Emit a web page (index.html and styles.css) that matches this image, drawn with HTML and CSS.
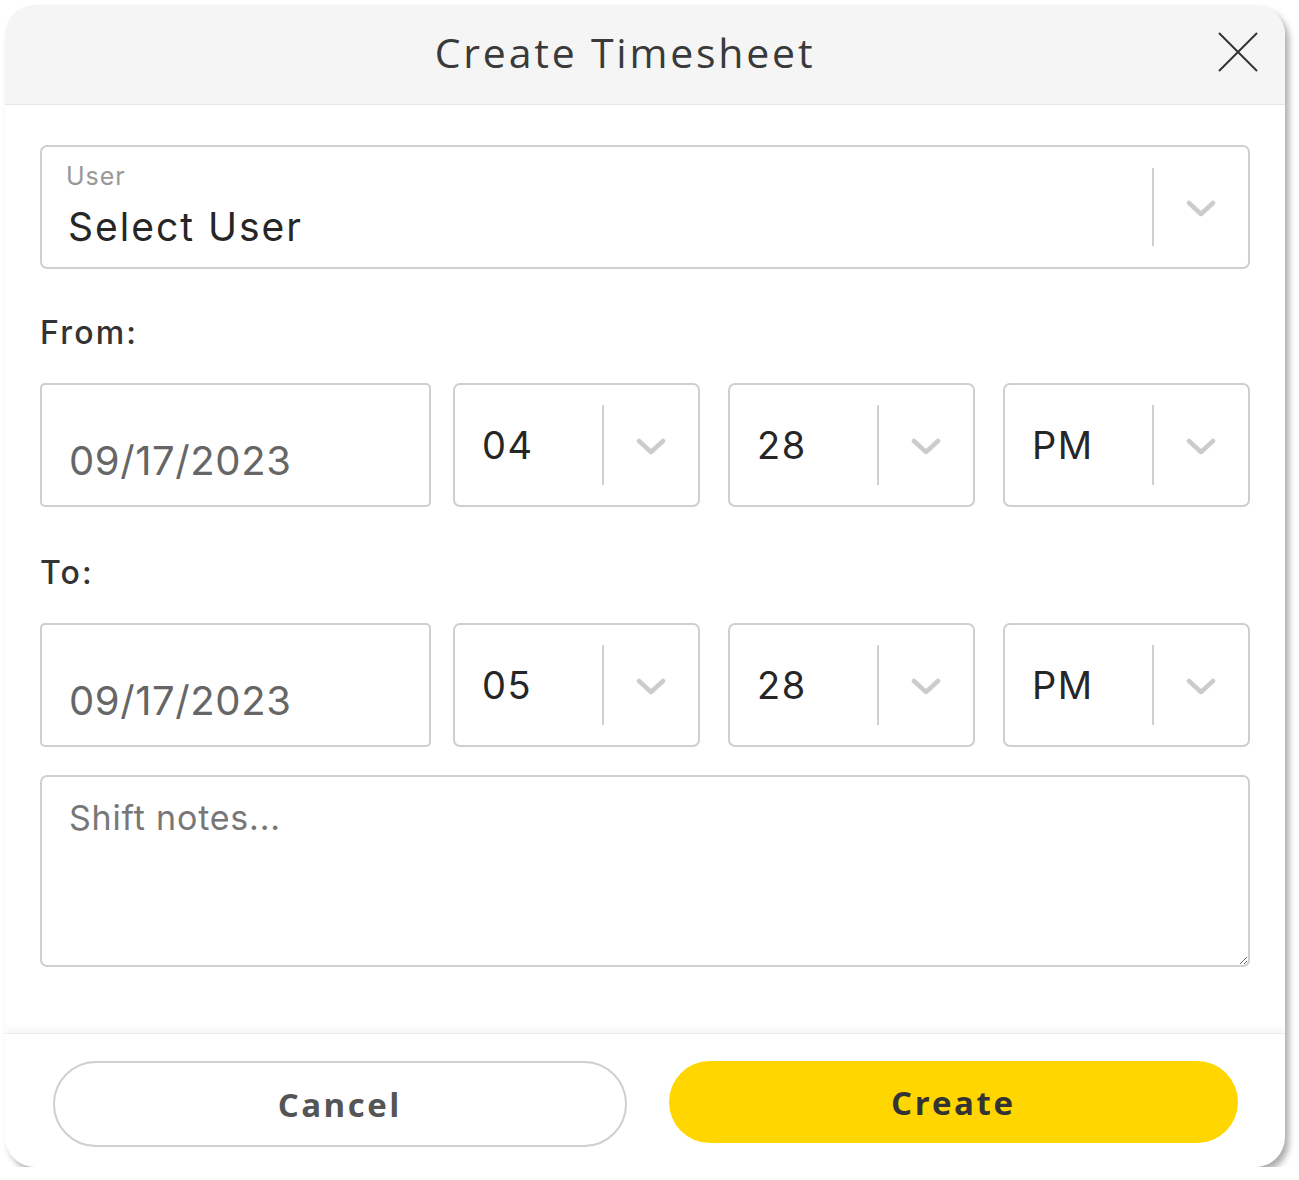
FILE: index.html
```html
<!DOCTYPE html>
<html>
<head>
<meta charset="utf-8">
<link rel="stylesheet" href="styles.css">
</head>
<body>
<div class="modal">
  <div class="header">
    <h1 class="title">Create Timesheet</h1>
    <span class="close" aria-label="close">
      <svg width="40" height="40" viewBox="0 0 40 40"><path d="M1 1 L39 39 M39 1 L1 39" stroke="#333" stroke-width="2" fill="none"/></svg>
    </span>
  </div>
  <div class="content">
    <div class="select big">
      <div class="select-value">
        <div class="select-label">User</div>
        <div class="select-text">Select User</div>
      </div>
      <span class="sep"></span>
      <span class="chev"><svg width="30" height="18" viewBox="0 0 30 18"><polyline points="3,3 15,14 27,3" stroke="#ccc" stroke-width="4.5" fill="none" stroke-linecap="round" stroke-linejoin="round"/></svg></span>
    </div>

    <div class="group-label">From:</div>
    <div class="row">
      <div class="date">09/17/2023</div>
      <div class="select small"><div class="select-value"><span class="val">04</span></div><span class="sep"></span><span class="chev"><svg width="30" height="18" viewBox="0 0 30 18"><polyline points="3,3 15,14 27,3" stroke="#ccc" stroke-width="4.5" fill="none" stroke-linecap="round" stroke-linejoin="round"/></svg></span></div>
      <div class="select small"><div class="select-value"><span class="val">28</span></div><span class="sep"></span><span class="chev"><svg width="30" height="18" viewBox="0 0 30 18"><polyline points="3,3 15,14 27,3" stroke="#ccc" stroke-width="4.5" fill="none" stroke-linecap="round" stroke-linejoin="round"/></svg></span></div>
      <div class="select small"><div class="select-value"><span class="val">PM</span></div><span class="sep"></span><span class="chev"><svg width="30" height="18" viewBox="0 0 30 18"><polyline points="3,3 15,14 27,3" stroke="#ccc" stroke-width="4.5" fill="none" stroke-linecap="round" stroke-linejoin="round"/></svg></span></div>
    </div>

    <div class="group-label">To:</div>
    <div class="row">
      <div class="date">09/17/2023</div>
      <div class="select small"><div class="select-value"><span class="val">05</span></div><span class="sep"></span><span class="chev"><svg width="30" height="18" viewBox="0 0 30 18"><polyline points="3,3 15,14 27,3" stroke="#ccc" stroke-width="4.5" fill="none" stroke-linecap="round" stroke-linejoin="round"/></svg></span></div>
      <div class="select small"><div class="select-value"><span class="val">28</span></div><span class="sep"></span><span class="chev"><svg width="30" height="18" viewBox="0 0 30 18"><polyline points="3,3 15,14 27,3" stroke="#ccc" stroke-width="4.5" fill="none" stroke-linecap="round" stroke-linejoin="round"/></svg></span></div>
      <div class="select small"><div class="select-value"><span class="val">PM</span></div><span class="sep"></span><span class="chev"><svg width="30" height="18" viewBox="0 0 30 18"><polyline points="3,3 15,14 27,3" stroke="#ccc" stroke-width="4.5" fill="none" stroke-linecap="round" stroke-linejoin="round"/></svg></span></div>
    </div>

    <textarea class="notes" placeholder="Shift notes..."></textarea>
  </div>
  <div class="footer">
    <button class="btn cancel">Cancel</button>
    <button class="btn create">Create</button>
  </div>
</div>
</body>
</html>
```

FILE: styles.css
```css
* { box-sizing: border-box; }
html, body { margin: 0; padding: 0; background: #fff; }
body { font-family: Inter, "Noto Sans", sans-serif; }

.modal {
  margin: 5px 0 0 5px;
  width: 1280px;
  height: 1162px;
  border-radius: 30px;
  background: #fff;
  box-shadow: 4px 5px 6px rgba(0,0,0,0.32);
  overflow: hidden;
  display: flex;
  flex-direction: column;
}

.header {
  height: 100px;
  background: #f5f5f5;
  border-bottom: 1px solid #e6e6e6;
  position: relative;
  display: flex;
  align-items: center;
  justify-content: center;
  padding-right: 40px;
}
.title {
  margin: 0 0 6px 0;
  font-family: "Open Sans", Inter, sans-serif;
  font-weight: 400;
  font-size: 41px;
  letter-spacing: 2.8px;
  color: #3a3a3a;
}
.close {
  position: absolute;
  right: 27px;
  top: 27px;
  width: 40px;
  height: 40px;
}

.content {
  flex: 1;
  padding: 40px 35px 0 35px;
}

.select {
  border: 2px solid #cfcfcf;
  border-radius: 7px;
  display: flex;
  align-items: center;
  background: #fff;
}
.select.big { height: 124px; }
.select-value { flex: 1; padding-left: 24px; }
.select-label {
  font-size: 25px;
  color: #999;
  letter-spacing: 1px;
  line-height: 30px;
  margin-top: -4px;
}
.select-text {
  font-size: 39px;
  color: #262626;
  letter-spacing: 2px;
  line-height: 44px;
  margin-top: 14px;
  padding-left: 2px;
}
.sep {
  width: 2px;
  height: 78px;
  background: #cfcfcf;
}
.chev {
  width: 94px;
  display: flex;
  justify-content: center;
  align-items: center;
  padding-top: 4px;
}

.group-label {
  font-size: 32px;
  font-weight: 500;
  color: #333;
  letter-spacing: 2.2px;
  margin: 44px 0 30px 0;
  line-height: 40px;
}
.row {
  display: flex;
  gap: 28px;
  height: 124px;
}
.date {
  width: 391px;
  margin-right: -6px;
  border: 2px solid #cfcfcf;
  border-radius: 5px;
  font-size: 40px;
  color: #666;
  padding: 52px 0 0 27px;
  letter-spacing: 0.6px;
  line-height: 48px;
}
.select.small { width: 247px; }
.select.small .select-value { padding-left: 27px; }
.val {
  font-size: 38px;
  color: #262626;
  letter-spacing: 1.5px;
}
.select.small .sep { height: 80px; }
.select.small .chev { width: 94px; }

.row + .group-label { margin-top: 46px; }

.notes {
  display: block;
  width: 100%;
  height: 192px;
  margin-top: 28px;
  border: 2px solid #d0d0d0;
  border-radius: 7px;
  padding: 20px 27px;
  font-family: Inter, "Noto Sans", sans-serif;
  font-size: 34px;
  color: #333;
  resize: vertical;
  outline: none;
}
.notes::placeholder { color: #777; letter-spacing: 0.8px; }

.footer {
  height: 134px;
  border-top: 1px solid #ececec;
  box-shadow: 0 -4px 8px rgba(0,0,0,0.04);
  display: flex;
  gap: 42px;
  padding: 27px 47px 0 48px;
  align-items: flex-start;
}
.btn {
  flex: 1;
  height: 86px;
  border-radius: 43px;
  font-family: "Open Sans", Inter, sans-serif;
  font-weight: 700;
  font-size: 33px;
  letter-spacing: 2.5px;
  cursor: pointer;
}
.cancel {
  background: #fff;
  border: 2px solid #cfcfcf;
  color: #555;
}
.create {
  background: #ffd600;
  border: none;
  color: #333;
  height: 82px;
}
```
